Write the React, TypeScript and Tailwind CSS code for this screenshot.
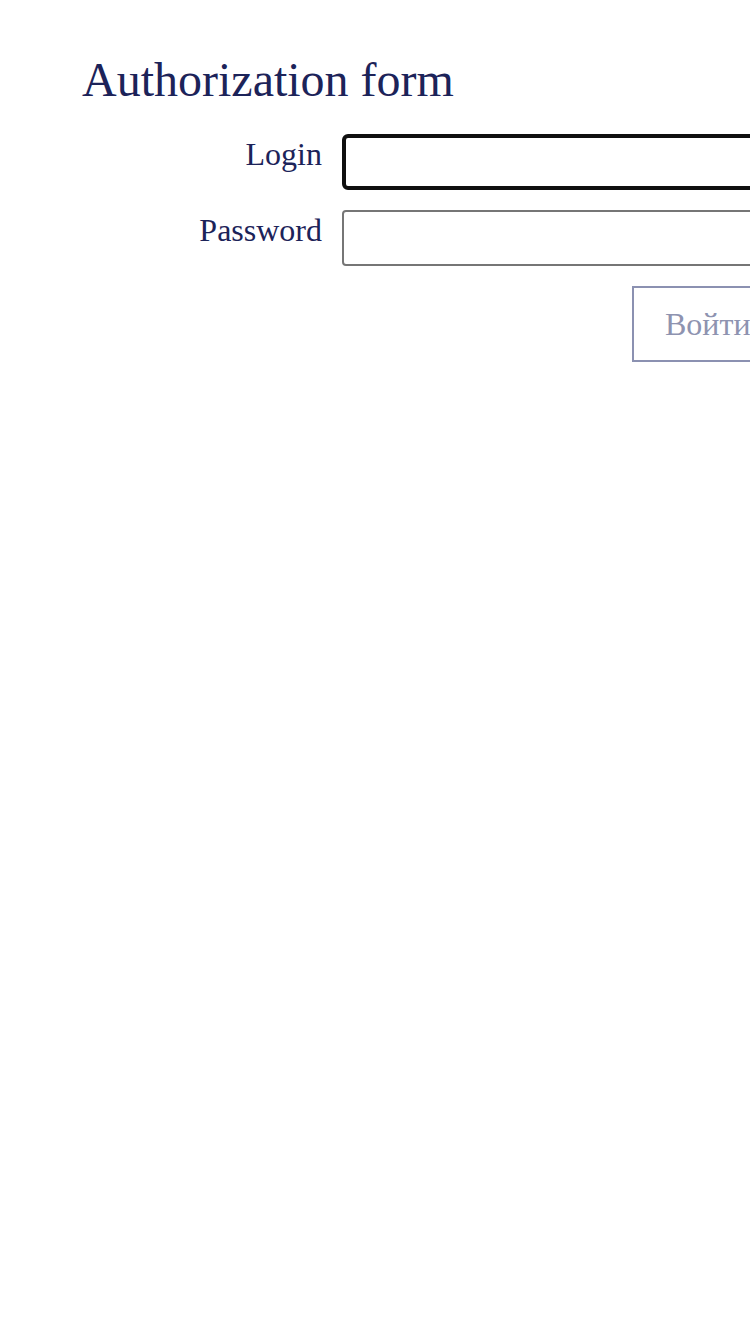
export default function App() {
    return (
        <div className="min-h-[1334px] w-[750px] overflow-hidden bg-white font-['Liberation_Serif','Times_New_Roman',serif] text-[#1c2359]">
            <div className="pl-[82px] pt-[52px]">
                {/* Заголовок */}
                <h1 className="text-[48px] leading-[56px]">Authorization form</h1>

                {/* Форма */}
                <form className="mt-[26px] grid grid-cols-[240px_441px] gap-x-[20px] gap-y-[20px]">
                    <label htmlFor="login" className="text-right text-[32px] leading-[40px]">
                        Login
                    </label>
                    <input
                        id="login"
                        type="text"
                        className="h-[56px] w-full rounded-[6px] border-[4px] border-[#101010] bg-white px-2 outline-none"
                    />

                    <label htmlFor="password" className="text-right text-[32px] leading-[40px]">
                        Password
                    </label>
                    <input
                        id="password"
                        type="password"
                        className="h-[56px] w-full rounded-[4px] border-2 border-[#767676] bg-white px-2 outline-none"
                    />

                    <div />
                    <div className="flex justify-end">
                        <button
                            type="button"
                            disabled
                            className="h-[76px] w-[151px] shrink-0 border-2 border-[#8b91b1] bg-white pl-[31px] text-left text-[32px] text-[#8e93b0]"
                        >
                            Войти
                        </button>
                    </div>
                </form>
            </div>
        </div>
    );
}
